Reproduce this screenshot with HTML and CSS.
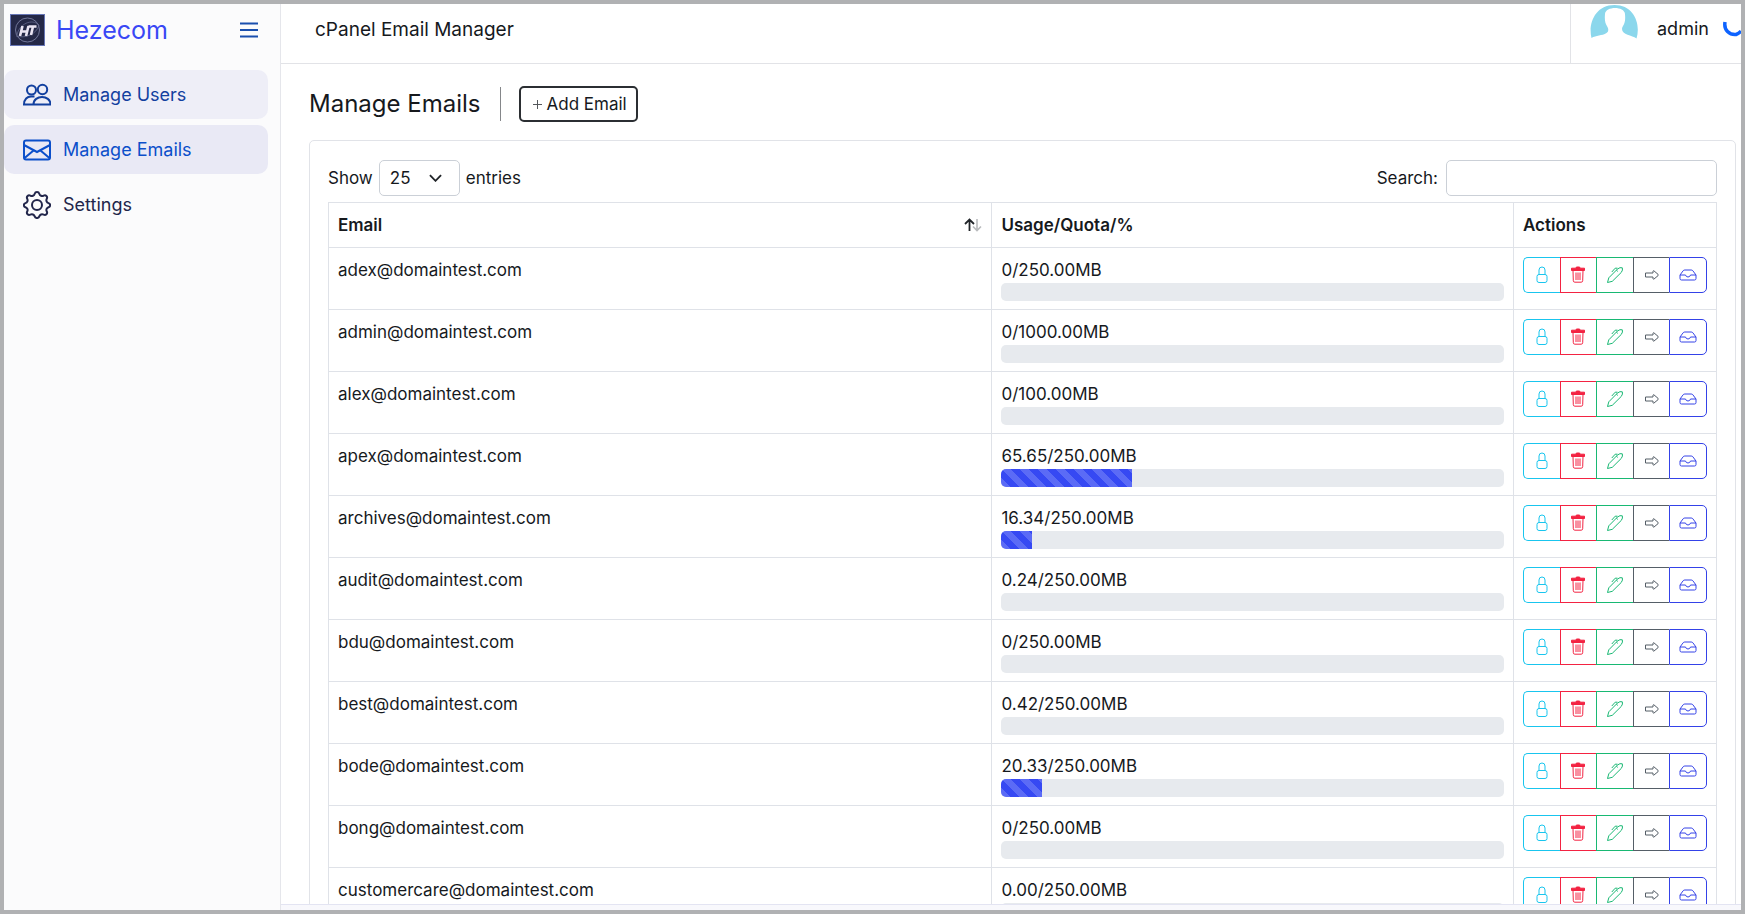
FILE: index.html
```html
<!DOCTYPE html>
<html lang="en">
<head>
<meta charset="utf-8">
<title>cPanel Email Manager</title>
<link rel="stylesheet" href="styles.css">
</head>
<body>
<svg class="sprite" aria-hidden="true">
  <symbol id="i-lock" viewBox="0 0 16 20"><path d="M5 10V5a3 3 0 0 1 6 0v5M5 9.500h6a2 2 0 0 1 2 2v4a2 2 0 0 1-2 2H5a2 2 0 0 1-2-2v-4a2 2 0 0 1 2-2z"/></symbol>
  <symbol id="i-trash" viewBox="0 0 16 20"><path d="M3 5.500l.3 10.200q.1 1.500 1.500 1.500h6.400q1.400 0 1.500-1.500l.3-10.200M6 7.500v7.500M8 7.500v7.500M10 7.500v7.500"/><path class="solid" d="M1.500 3.200h4.300q0-1.200 1.200-1.200h2q1.200 0 1.200 1.200h4.300v2.300h-13z"/></symbol>
  <symbol id="i-pen" viewBox="0 0 18 20"><path d="M1.500 17.500l1.300-4.700L11.500 4q2.500-2 4.800-1.200.8 2.200-1 4.600L6.300 16.300zM11.500 3.200H9.200L5.800 7M10.300 5.200l1.500 1.200"/></symbol>
  <symbol id="i-arrow" viewBox="0 0 18 20"><path d="M2.500 8h7.500V6.200q.2-.8 1-.3l4 3.400q.7.700 0 1.400l-4 3.300q-.8.500-1-.3V12H2.500z"/></symbol>
  <symbol id="i-inbox" viewBox="0 0 18 20"><path d="M1 10l3.200-4.300Q4.800 5 5.800 5h6.400q1 0 1.600.7L17 10v3.500q0 1.500-1.500 1.500h-13Q1 15 1 13.500zM1 10h5.500q.5 2 2.500 2t2.500-2H17"/></symbol>
</svg>
<div class="app">
  <aside class="sidebar">
    <div class="brand">
      <svg class="logo" viewBox="0 0 35 32"><rect x=".5" y=".5" width="34" height="31" fill="#242847" stroke="#6675b5"/><circle cx="17.500" cy="16" r="12" fill="none" stroke="#858aad" stroke-width=".8"/><path d="M7 21C9 10 22 4 29 11M6 22c9 3 21-2 23-11" fill="none" stroke="#6d7196" stroke-width=".7"/><path d="M12.500 12l-2.500 10M18.500 12L16 22M11.500 17.500h6M18.500 12.500h8M23 12.500L21 21" fill="none" stroke="#e9e4f3" stroke-width="2.600"/></svg>
      <a class="brand-name" href="#">Hezecom</a>
      <button class="toggle" aria-label="Toggle menu"><svg viewBox="0 0 18 16"><path d="M0 1.500h18M0 8h18M0 14.500h18"/></svg></button>
    </div>
    <nav class="nav">
      <a class="nav-item users" href="#"><svg viewBox="0 0 28 28"><circle cx="8.500" cy="9" r="4.500"/><circle cx="19.500" cy="8.500" r="4.700"/><path d="M10.500 23.500c0-10 17-10 17 0zM10.500 23.500H1c0-5 3-8.500 8-8h2.500"/></svg>Manage Users</a>
      <a class="nav-item active" href="#"><svg viewBox="0 0 28 28"><rect x="1" y="4.500" width="26" height="19" rx="2"/><path d="M1 9l13 7 13-7M1 22.500L10.500 14.500M27 22.500L17.500 14.500"/></svg>Manage Emails</a>
      <a class="nav-item" href="#"><svg viewBox="0 0 28 28"><circle cx="14" cy="14" r="5"/><path d="M11.700 2.700C12.400.5 15.600.5 16.300 2.700c.6 2 2.600 2.900 4.400 1.900 2-1.100 4.200 1.100 3.100 3.100-1 1.800-.1 3.800 1.700 4.400 2.200.7 2.200 3.400 0 4.100-1.800.6-2.700 2.600-1.700 4.400 1.100 2-1.100 4.200-3.100 3.100-1.800-1-3.800-.1-4.400 1.700-.7 2.200-3.900 2.200-4.600 0-.6-1.800-2.600-2.700-4.400-1.700-2 1.100-4.200-1.100-3.100-3.100 1-1.800.1-3.800-1.700-4.400-2.200-.7-2.200-3.400 0-4.100 1.800-.6 2.700-2.600 1.700-4.400-1.100-2 1.100-4.200 3.100-3.100 1.800 1 3.800.1 4.400-1.900z"/></svg>Settings</a>
    </nav>
  </aside>
  <div class="page">
    <header class="topbar">
      <div class="app-title">cPanel Email Manager</div>
      <div class="account">
        <svg class="avatar" viewBox="0 0 48 35"><path fill="#8bd7ec" d="M1.500 34C-2 20 5 1 24.500 1S51 20 46.500 34.500C42 31 32 31 32 25q0-1.500 1-3c2-3 2.500-6 2-12C34.500 2 15.500 2 15 10c-.5 6 0 9 2.500 13q2 4-1 6C12 32 6 31 1.500 34z"/></svg>
        <span>admin</span>
        <svg class="spinner" viewBox="0 0 18 18"><path d="M2 2Q1 8 4.500 11.500T13 14.500Q16 13.500 18 11" fill="none" stroke="#0d63ff" stroke-width="3.500"/></svg>
      </div>
    </header>
    <main class="content">
      <div class="heading"><h1>Manage Emails</h1><button class="add"><svg viewBox="0 0 9 9"><path d="M0 4.500h9M4.500 0v9"/></svg>Add Email</button></div>
      <section class="card">
        <div class="controls">
          <label>Show <select><option>25</option><option>50</option></select> entries</label>
          <label class="search">Search: <input type="search"></label>
        </div>
        <table>
          <colgroup><col class="c-email"><col><col class="c-actions"></colgroup>
          <thead><tr><th><div class="sort">Email<svg viewBox="0 0 18 14"><path d="M1 6l4.500-4.500L10 6M5.500 2v11" stroke="#212529" stroke-width="1.800"/><path d="M9 8.500l4 4 4-4M13 12V1" stroke="#b9bbbd" stroke-width="1.600"/></svg></div></th><th>Usage/Quota/%</th><th>Actions</th></tr></thead>
          <tbody id="rows"></tbody>
        </table>
      </section>
    </main>
    <footer class="footer"></footer>
  </div>
</div>
<script src="app.js"></script>
</body>
</html>
```
FILE: styles.css
```css
*{box-sizing:border-box}
body{margin:0;font-family:Inter,"Noto Sans",sans-serif;font-size:17px;line-height:26px;color:#16191d}
button,select,input{font:inherit;color:inherit}
svg{flex:none}
.sprite{display:none}
.app{display:flex;height:100vh;border:4px solid #b0b1b3;overflow:hidden;background:#fff}
.sidebar{flex:none;width:277px;background:#fbfbfc;border-right:1px solid #e5e6eb}
.brand{display:flex;align-items:center;height:52px;padding:0 22px 0 6px}
.logo{width:35px;height:32px}
.brand-name{margin-left:11px;font-size:25px;color:#3947f5;text-decoration:none}
.toggle{margin-left:auto;width:18px;height:26px;padding:0;border:0;background:none;display:flex;align-items:center}
.toggle svg{width:18px;height:16px;stroke:#1a4fae;stroke-width:2}
.nav{display:flex;flex-direction:column;gap:6px;padding:14px 12px 0 0}
.nav-item{display:flex;align-items:center;gap:12px;height:49px;padding-left:19px;border-radius:10px;font-size:18px;color:#22264b;text-decoration:none}
.nav-item svg{width:28px;height:28px;fill:none;stroke:currentColor;stroke-width:2}
.users{background:#eeeef7;color:#12409f}
.active{background:#e9e9f5;color:#0b4fca}
.page{flex:1;min-width:0;display:flex;flex-direction:column}
.topbar{flex:none;display:flex;justify-content:space-between;height:60px;padding-left:34px;border-bottom:1px solid #e2e3e7}
.app-title{font-size:19px;line-height:52px}
.account{display:flex;width:171px;padding-left:19px;border-left:1px solid #e2e3e7;font-size:18px;line-height:50px;overflow:hidden}
.avatar{width:48px;height:35px}
.account span{margin-left:19px}
.spinner{width:18px;height:18px;margin:16px 0 0 auto}
.content{flex:1;min-height:0;padding:22px 5px 0 28px;overflow:hidden}
.heading{display:flex;align-items:center;height:36px;margin-bottom:18px}
h1{margin:0;padding-right:19px;border-right:1px solid #85878a;font-size:24px;line-height:34px;font-weight:400}
.add{display:flex;align-items:center;gap:5px;height:36px;margin-left:18px;padding:0 9px 0 12px;border:2px solid #2b2e32;border-radius:5px;background:#fff}
.add svg{width:9px;height:9px;stroke:#55585c}
.card{border:1px solid #e1e3e8;border-radius:5px;padding:19px 18px}
.controls{display:flex;justify-content:space-between;height:42px}
.controls label{display:flex;align-items:center;gap:6px;height:35px}
select{appearance:none;width:81px;height:36px;padding:0 10px;border:1px solid #cbd0d7;border-radius:5px;background:#fff url("data:image/svg+xml,%3Csvg xmlns='http://www.w3.org/2000/svg' viewBox='0 0 14 8'%3E%3Cpath d='M1 1l6 6 6-6' fill='none' stroke='%23212529' stroke-width='2'/%3E%3C/svg%3E") no-repeat right 17px center/13px 8px}
.search input{width:271px;height:36px;margin-left:2px;padding:0 10px;border:1px solid #cbd0d7;border-radius:5px;background:#fff}
table{width:100%;table-layout:fixed;border-collapse:collapse}
.c-email{width:47.8%}
.c-actions{width:203px}
th,td{border:1px solid #dfe2e8;padding:9px 9px 8px;text-align:left;vertical-align:top}
th{height:45px;font-weight:600}
td{height:62px}
.sort{display:flex;align-items:center;justify-content:space-between}
.sort svg{width:18px;height:14px;fill:none}
.bar{height:18px;border-radius:5px;background:#e7eaee;overflow:hidden}
.fill{height:100%;background:linear-gradient(45deg,#5b6bf6 25%,#3649f3 25% 50%,#5b6bf6 50% 75%,#3649f3 75%) 0 0/18px 18px}
.actions{display:flex}
.actions button{flex:1;display:flex;align-items:center;justify-content:center;height:36px;padding:0;border:1px solid currentColor;border-right-width:0;background:#fff}
.actions button:first-child{border-radius:5px 0 0 5px}
.actions button:last-child{border-right-width:1px;border-radius:0 5px 5px 0}
.actions svg{width:18px;height:20px;fill:none;stroke:currentColor;stroke-width:1}
.solid{fill:currentColor}
.actions .lock{color:#19c5ee}.actions .trash{color:#f32342}.actions .pen{color:#18b873}.actions .arrow{color:#555e67}.actions .inbox{color:#3442e8}
.footer{flex:none;height:6px;border-top:1px solid #e3e4f2;background:#f8f8fc}
```
FILE: app.js
```js
const accounts = [
  ["adex", "0/250.00MB", 0],
  ["admin", "0/1000.00MB", 0],
  ["alex", "0/100.00MB", 0],
  ["apex", "65.65/250.00MB", 26],
  ["archives", "16.34/250.00MB", 6],
  ["audit", "0.24/250.00MB", 0],
  ["bdu", "0/250.00MB", 0],
  ["best", "0.42/250.00MB", 0],
  ["bode", "20.33/250.00MB", 8],
  ["bong", "0/250.00MB", 0],
  ["customercare", "0.00/250.00MB", 0]
];
const actions = [["lock", "Change password"], ["trash", "Delete"], ["pen", "Edit"], ["arrow", "Forward"], ["inbox", "Webmail"]];
const buttons = actions.map(([k, label]) =>
  `<button class="${k}" aria-label="${label}"><svg><use href="#i-${k}"/></svg></button>`).join("");
document.getElementById("rows").innerHTML = accounts.map(([name, usage, pct]) =>
  `<tr><td>${name}@domaintest.com</td><td>${usage}<div class="bar"><div class="fill" style="width:${pct}%"></div></div></td><td><div class="actions">${buttons}</div></td></tr>`).join("");
```
